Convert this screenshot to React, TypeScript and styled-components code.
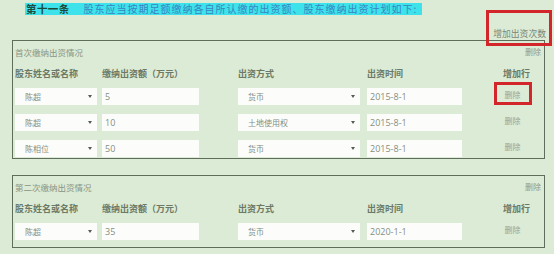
import React from "react";
import styled, { createGlobalStyle } from "styled-components";

type Entry = { name: string; amount: string; method: string; date: string };

type Round = { title: string; rows: Entry[]; padBottom: number; markFirst?: boolean };

const rounds: Round[] = [
    {
        title: "首次缴纳出资情况",
        padBottom: 1,
        markFirst: true,
        rows: [
            { name: "陈超", amount: "5", method: "货币", date: "2015-8-1" },
            { name: "陈超", amount: "10", method: "土地使用权", date: "2015-8-1" },
            { name: "陈相位", amount: "50", method: "货币", date: "2015-8-1" },
        ],
    },
    {
        title: "第二次缴纳出资情况",
        padBottom: 7,
        rows: [{ name: "陈超", amount: "35", method: "货币", date: "2020-1-1" }],
    },
];

const GlobalStyle = createGlobalStyle`
    html, body {
        margin: 0;
        padding: 0;
        background: #dcebd5;
    }
    body {
        font-family: "Noto Sans CJK SC", "Noto Sans", sans-serif;
    }
`;

export default function App(): JSX.Element {
    return (
        <>
            <GlobalStyle />
            <Page>
                <ArticleLine>
                    <Highlight>
                        <ArticleNo>第十一条</ArticleNo>
                        <ArticleText>股东应当按期足额缴纳各自所认缴的出资额、股东缴纳出资计划如下:</ArticleText>
                    </Highlight>
                </ArticleLine>
                <ActionBar>
                    <AddButton>增加出资次数</AddButton>
                </ActionBar>
                <PanelList>
                    {rounds.map((round) => (
                        <Panel key={round.title} $padBottom={round.padBottom}>
                            <PanelHead>
                                <span>{round.title}</span>
                                <HeadRemove>删除</HeadRemove>
                            </PanelHead>
                            <Line $head>
                                <span>股东姓名或名称</span>
                                <span>缴纳出资额（万元）</span>
                                <span>出资方式</span>
                                <span>出资时间</span>
                                <ActionHead>增加行</ActionHead>
                            </Line>
                            <Body>
                                {round.rows.map((row, i) => (
                                    <Line key={i}>
                                        <Select $w={82}>
                                            {row.name}
                                            <Arrow />
                                        </Select>
                                        <TextField $w={97}>{row.amount}</TextField>
                                        <Select $w={122}>
                                            {row.method}
                                            <Arrow />
                                        </Select>
                                        <TextField $w={95}>{row.date}</TextField>
                                        <ActionCell>
                                            <Remove $marked={round.markFirst && i === 0}>删除</Remove>
                                        </ActionCell>
                                    </Line>
                                ))}
                            </Body>
                        </Panel>
                    ))}
                </PanelList>
            </Page>
        </>
    );
}

const Page = styled.div`
    width: 554px;
    height: 254px;
    overflow: hidden;
    box-sizing: border-box;
    padding-top: 3px;
    display: flex;
    flex-direction: column;
    background: #dcebd5;
`;

const ArticleLine = styled.div`
    display: flex;
    height: 13px;
    padding-left: 25px;
`;

const Highlight = styled.div`
    display: flex;
    align-items: center;
    height: 12px;
    padding: 0 5px 0 1px;
    background: #3ee2ea;
`;

const ArticleNo = styled.span`
    font-size: 10.5px;
    line-height: 12px;
    font-weight: 700;
    letter-spacing: 0.4px;
    color: #1d4a3c;
    margin-right: 14px;
`;

const ArticleText = styled.span`
    font-size: 10px;
    line-height: 12px;
    letter-spacing: 1px;
    color: #3a84c2;
`;

const ActionBar = styled.div`
    display: flex;
    justify-content: flex-end;
    align-items: flex-end;
    height: 24px;
    padding: 0 8px 1px 0;
    box-sizing: border-box;
`;

const AddButton = styled.span`
    position: relative;
    font-size: 8.8px;
    line-height: 10px;
    color: #7a8676;

    &::after {
        content: "";
        position: absolute;
        left: -7px;
        right: -6px;
        top: -19px;
        bottom: -7px;
        border: 3px solid #d3262a;
    }
`;

const PanelList = styled.div`
    display: flex;
    flex-direction: column;
    gap: 16px;
`;

const Panel = styled.section<{ $padBottom: number }>`
    margin: 0 9px 0 12px;
    border: 1px solid #5f6e5b;
    padding: 0 1px ${(p) => p.$padBottom}px 2px;
`;

const PanelHead = styled.div`
    display: flex;
    justify-content: space-between;
    align-items: center;
    height: 21px;
    padding-right: 2px;
    font-size: 8.5px;
    color: #8a9585;
`;

const HeadRemove = styled.span`
    font-size: 8px;
    color: #8f9a8b;
`;

const Line = styled.div<{ $head?: boolean }>`
    display: grid;
    grid-template-columns: 87px 136px 129px 123px 1fr;
    align-items: center;
    height: ${(p) => (p.$head ? 22 : 17)}px;
    font-size: ${(p) => (p.$head ? 9 : 8)}px;
    font-weight: ${(p) => (p.$head ? 700 : 400)};
    color: ${(p) => (p.$head ? "#6b7966" : "#848e81")};
`;

const ActionHead = styled.span`
    text-align: center;
`;

const Body = styled.div`
    display: flex;
    flex-direction: column;
    gap: 9px;
    margin-top: 4px;
`;

const Select = styled.div<{ $w: number }>`
    display: flex;
    align-items: center;
    justify-content: space-between;
    width: ${(p) => p.$w}px;
    height: 17px;
    box-sizing: border-box;
    padding: 0 5px 0 10px;
    background: #fcfdfb;
    font-size: 8px;
    color: #848e81;
`;

const Arrow = styled.span`
    width: 0;
    height: 0;
    border-left: 2px solid transparent;
    border-right: 2px solid transparent;
    border-top: 3px solid #535d50;
`;

const TextField = styled.div<{ $w: number }>`
    display: flex;
    align-items: center;
    width: ${(p) => p.$w}px;
    height: 17px;
    box-sizing: border-box;
    padding-left: 3px;
    background: #fcfdfb;
    font-family: "Open Sans", "Liberation Sans", sans-serif;
    font-size: 9px;
    color: #848e81;
`;

const ActionCell = styled.div`
    text-align: center;
    padding-right: 8px;
`;

const Remove = styled.span<{ $marked?: boolean }>`
    position: relative;
    top: -2px;
    font-size: 8px;
    line-height: 10px;
    color: #98a394;

    &::after {
        content: "";
        display: ${(p) => (p.$marked ? "block" : "none")};
        position: absolute;
        left: -11px;
        right: -11px;
        top: -7px;
        bottom: -5px;
        border: 3px solid #d3262a;
    }
`;
